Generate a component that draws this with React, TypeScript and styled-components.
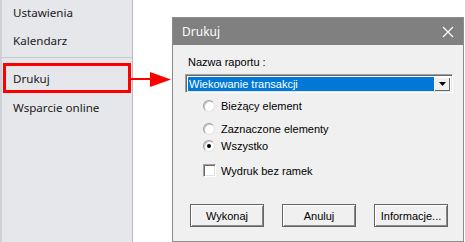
import styled, { createGlobalStyle } from 'styled-components';

const GlobalStyle = createGlobalStyle`
  html, body {
    margin: 0;
    padding: 0;
    background: #fff;
  }
`;

const Page = styled.div`
  position: relative;
  display: flex;
  width: 465px;
  height: 242px;
  overflow: hidden;
  background: #fff;
`;

const Sidebar = styled.nav`
  display: flex;
  flex-direction: column;
  width: 130px;
  flex-shrink: 0;
  background: #e6e7ea;
  border-left: 2px solid #d0d1d5;
  border-right: 1px solid #b9babe;
  font-family: 'Noto Sans', 'Open Sans', sans-serif;
  font-size: 11.6px;
  color: #1a1a1a;
`;

interface ItemProps {
  $highlighted?: boolean;
  $tight?: boolean;
}

const NavItem = styled.div<ItemProps>`
  display: flex;
  align-items: center;
  box-sizing: border-box;
  height: ${(p) => (p.$highlighted ? '30px' : '28px')};
  padding: 0 0 ${(p) => (p.$tight ? '4px' : '0')} ${(p) => (p.$highlighted ? '7px' : '11px')};
  margin: ${(p) => (p.$highlighted ? '0 1px' : '0')};
  border: ${(p) => (p.$highlighted ? '3px solid #ff0000' : '0')};
`;

const Separator = styled.div`
  height: 1px;
  margin: 1px 0 5px;
  background: #c9cacd;
`;

const Stage = styled.main`
  flex: 1;
  padding: 17px 0 0 39px;
`;

const Dialog = styled.section`
  display: flex;
  flex-direction: column;
  width: 290px;
  height: 223px;
  border: 1px solid #8c8c8c;
  background: #f0f0f0;
  font-family: 'Liberation Sans', Arial, sans-serif;
  font-size: 11px;
  color: #000;
`;

const TitleBar = styled.header`
  display: flex;
  align-items: center;
  justify-content: space-between;
  height: 27px;
  padding: 0 9px 0 9px;
  background: #808080;
  color: #fff;
  font-family: 'Noto Sans', 'Open Sans', sans-serif;
  font-size: 12px;
`;

const Body = styled.div`
  display: flex;
  flex-direction: column;
  padding: 11px 10px 0 12px;
`;

const Label = styled.div`
  padding-left: 3px;
  line-height: 13px;
`;

const Combo = styled.div`
  display: flex;
  align-items: stretch;
  box-sizing: border-box;
  height: 19px;
  margin-top: 5px;
  padding: 1px;
  background: #fff;
  border-top: 1px solid #a0a0a0;
  border-left: 1px solid #a0a0a0;
  border-bottom: 1px solid #fff;
  border-right: 1px solid #fff;
  box-shadow: inset 1px 1px #696969, inset -1px -1px #e3e3e3;
`;

const ComboValue = styled.div`
  flex: 1;
  display: flex;
  align-items: center;
  padding-left: 1px;
  margin: 1px 0 0 1px;
  background: #0078d7;
  color: #fff;
`;

const ComboButton = styled.div`
  display: flex;
  align-items: center;
  justify-content: center;
  width: 16px;
  margin: 1px 1px 0 0;
  background: #f0f0f0;
  box-shadow: inset 1px 1px #fff, inset -1px -1px #696969;
`;

interface OptionProps {
  $mt: number;
}

const Option = styled.label<OptionProps>`
  display: flex;
  align-items: center;
  height: 17px;
  margin-top: ${(p) => p.$mt}px;
  padding-left: 18px;
  gap: 6px;
`;

const Radio = styled.span<{ $checked?: boolean }>`
  position: relative;
  width: 10px;
  height: 10px;
  border-radius: 50%;
  background: #fff;
  border: 1px solid;
  border-color: #a0a0a0 #e3e3e3 #e3e3e3 #a0a0a0;
  box-shadow: inset 1px 1px #c8c8c8;
  &::after {
    content: '';
    display: ${(p) => (p.$checked ? 'block' : 'none')};
    position: absolute;
    left: 3px;
    top: 3px;
    width: 4px;
    height: 4px;
    border-radius: 50%;
    background: #000;
  }
`;

const Check = styled.span`
  box-sizing: border-box;
  width: 13px;
  height: 13px;
  margin-right: -1px;
  background: #fff;
  border: 1px solid;
  border-color: #a0a0a0 #fff #fff #a0a0a0;
  box-shadow: inset 1px 1px #696969, inset -1px -1px #e3e3e3;
`;

const Actions = styled.div`
  display: flex;
  gap: 18px;
  margin-top: 25px;
  padding-left: 5px;
`;

const Button = styled.button`
  width: 74px;
  height: 23px;
  padding: 0;
  background: #f0f0f0;
  border: 1px solid #646464;
  border-radius: 0;
  box-shadow: inset 1px 1px #fff, inset -1px -1px #8a8a8a;
  font-family: 'Liberation Sans', Arial, sans-serif;
  font-size: 11px;
  color: #000;
`;

const Arrow = styled.svg`
  position: absolute;
  left: 131px;
  top: 71px;
`;

export default function App() {
  return (
    <Page>
      <GlobalStyle />
      <Sidebar>
        <NavItem $tight>Ustawienia</NavItem>
        <NavItem $tight>Kalendarz</NavItem>
        <Separator />
        <NavItem $highlighted>Drukuj</NavItem>
        <NavItem>Wsparcie online</NavItem>
      </Sidebar>
      <Stage>
        <Dialog>
          <TitleBar>
            <span>Drukuj</span>
            <svg width="12" height="12" viewBox="0 0 12 12">
              <path d="M1 1 L11 11 M11 1 L1 11" stroke="#fff" strokeWidth="1.1" />
            </svg>
          </TitleBar>
          <Body>
            <Label>Nazwa raportu :</Label>
            <Combo>
              <ComboValue>Wiekowanie transakcji</ComboValue>
              <ComboButton>
                <svg width="7" height="4" viewBox="0 0 7 4">
                  <path d="M0 0 H7 L3.5 4 Z" fill="#000" />
                </svg>
              </ComboButton>
            </Combo>
            <Option $mt={4}>
              <Radio />
              Bieżący element
            </Option>
            <Option $mt={6}>
              <Radio />
              Zaznaczone elementy
            </Option>
            <Option $mt={0}>
              <Radio $checked />
              Wszystko
            </Option>
            <Option $mt={8}>
              <Check />
              Wydruk bez ramek
            </Option>
            <Actions>
              <Button>Wykonaj</Button>
              <Button>Anuluj</Button>
              <Button>Informacje...</Button>
            </Actions>
          </Body>
        </Dialog>
      </Stage>
      <Arrow width="41" height="17" viewBox="0 0 41 17">
        <path d="M0 8 H21" stroke="#ff0000" strokeWidth="2" />
        <path d="M19 1 L40 8.5 L19 16 Z" fill="#ff0000" />
      </Arrow>
    </Page>
  );
}
